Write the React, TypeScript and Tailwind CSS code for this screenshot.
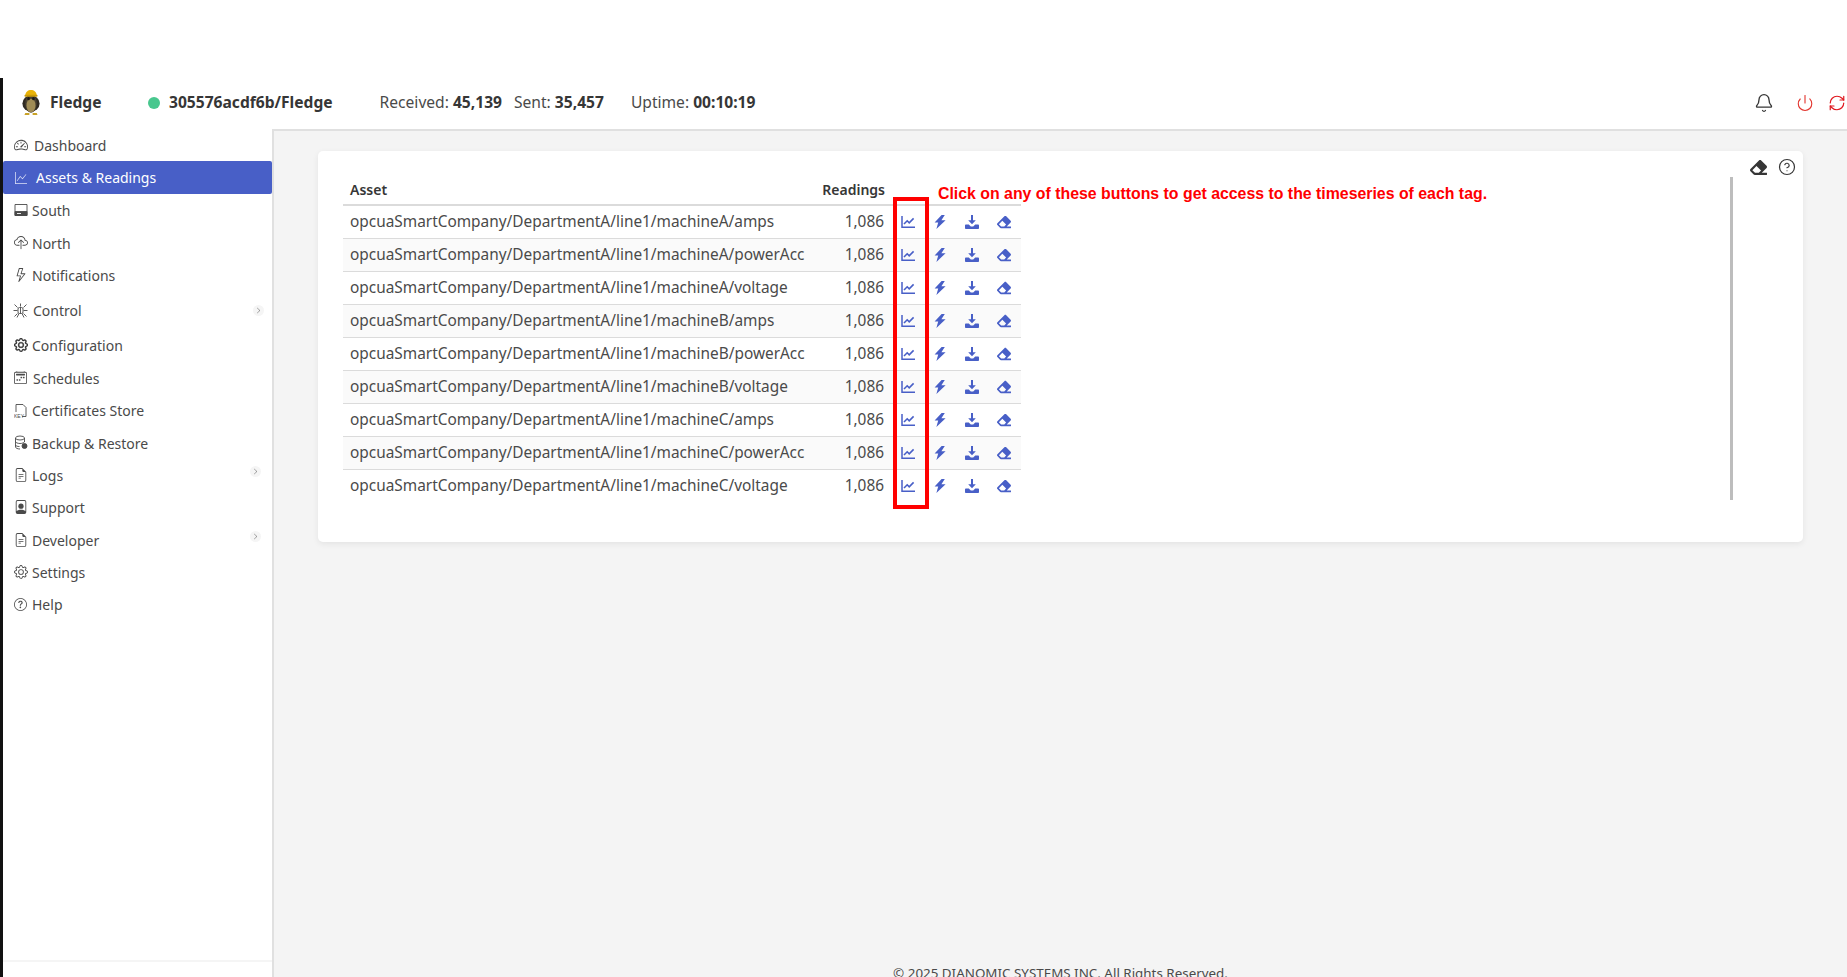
import React from "react";
import { FaEraser } from "react-icons/fa";
import {
  BsCalendar2Week,
  BsChevronRight,
  BsCloudUpload,
  BsFilePerson,
  BsFileEarmarkText,
  BsGear,
  BsGraphUp,
  BsLightning,
  BsQuestionCircle,
  BsSpeedometer2,
} from "react-icons/bs";
import { Bell, ChevronLeft, CircleHelp, Power, RefreshCw } from "lucide-react";

const OwlLogo = () => (
  <svg width="18" height="27" viewBox="0 0 22 28" preserveAspectRatio="none">
    <ellipse cx="11" cy="15" rx="10.5" ry="8.5" fill="#2f2a22" />
    <ellipse cx="11" cy="15" rx="7" ry="9.5" fill="#4a4130" />
    <ellipse cx="11" cy="17" rx="5.5" ry="7" fill="#a08c55" />
    <path d="M4 7 C4 -1 18 -1 18 7 Z" fill="#eab308" />
    <rect x="3" y="6" width="16" height="2" rx="1" fill="#ca9a06" />
    <circle cx="8" cy="10" r="1.6" fill="#1c1917" />
    <circle cx="14" cy="10" r="1.6" fill="#1c1917" />
    <path d="M4 25 h5 v2 h-6 Z M13 25 h5 l1 2 h-6 Z" fill="#c9a227" />
  </svg>
);

const ServerIcon = () => (
  <svg width="14" height="14" viewBox="0 0 14 14" fill="none" stroke="#4a4a4a" strokeWidth="0.9">
    <path d="M1 1.5h12v11H1z" />
    <path d="M1 8.5h12v4H1z" fill="#4a4a4a" />
    <path d="M3 10.5h4" stroke="#fff" />
  </svg>
);

const KeyFileIcon = () => (
  <svg width="14" height="15" viewBox="0 0 14 15" fill="none" stroke="#4a4a4a" strokeWidth="0.9">
    <path d="M2 9V1.5h7l3 3v9H8" />
    <text x="0" y="14.5" fontSize="5" fill="#4a4a4a" stroke="none" fontFamily="Liberation Sans, sans-serif">
      KEY
    </text>
  </svg>
);

const BackupIcon = () => (
  <svg width="14" height="15" viewBox="0 0 14 15" fill="none" stroke="#4a4a4a" strokeWidth="0.9">
    <ellipse cx="6" cy="3" rx="4.5" ry="2" />
    <path d="M1.5 3v9c0 1 2 2 4.5 2M10.5 3v4M1.5 6.5c0 1 2 2 4.5 2s4.5-1 4.5-2M1.5 10c0 1 2 1.5 4 1.5" />
    <circle cx="10.5" cy="11" r="2.5" fill="#4a4a4a" />
  </svg>
);

const ControlIcon = () => (
  <svg width="15" height="15" viewBox="0 0 15 15" fill="none" stroke="#4a4a4a" strokeWidth="0.9">
    <rect x="5" y="4.5" width="5" height="6" rx="1.5" />
    <path d="M7.5 4.5v6M7.5 0.5v3M1.5 1.5l3 3M13.5 1.5l-3 3M0.5 7.5h4M10.5 7.5h4M1.5 13.5l3-3M13.5 13.5l-3-3M4 14.5l2-4M11 14.5l-2-4" />
  </svg>
);

// table action icons, drawn to match the solid glyphs in the picture
const ChartIcon = () => (
  <svg width="14" height="14" viewBox="0 0 14 14" fill="none" stroke="currentColor">
    <path d="M1 1v11.2h13" strokeWidth="1.5" />
    <path d="M3 9l3.2-3.2 2 2L12.6 3.4" strokeWidth="1.6" />
  </svg>
);

const BoltIcon = () => (
  <svg width="12" height="14" viewBox="0 0 12 14" fill="currentColor">
    <path d="M7.6 0 0.6 7.6h3.6L2.4 14 11.6 5.2H7.4L10.8 0Z" />
  </svg>
);

const DownloadIcon = () => (
  <svg width="14" height="14" viewBox="0 0 14 14" fill="currentColor">
    <path d="M6 0h2v5.2h2.8L7 9.2 3.2 5.2H6z" />
    <path d="M0.8 9.6h3l2 1.8h2.4l2-1.8h3c.4 0 .8.4.8.8v2.8c0 .4-.4.8-.8.8H.8c-.4 0-.8-.4-.8-.8v-2.8c0-.4.4-.8.8-.8z" />
  </svg>
);

const icon = "text-[#4a4a4a]";

const menu = [
  { label: "Dashboard", h: "h-[32.4px]", gap: "gap-[6px]", el: <BsSpeedometer2 size={14} className={icon} /> },
  { label: "Assets & Readings", h: "h-[32.6px]", gap: "gap-[8px]", active: true, el: <BsGraphUp size={12} className="text-[#dfe3f7]" /> },
  { label: "South", h: "h-[32.4px]", gap: "gap-[4px]", el: <ServerIcon /> },
  { label: "North", h: "h-[32.4px]", gap: "gap-[4px]", el: <BsCloudUpload size={14} className={icon} /> },
  { label: "Notifications", h: "h-[32.4px]", gap: "gap-[4px]", el: <BsLightning size={14} className={icon} /> },
  { label: "Control", h: "h-[38px]", gap: "gap-[5px]", chevron: "mt-0", el: <ControlIcon /> },
  { label: "Configuration", h: "h-[32.4px]", gap: "gap-[4px]", el: <BsGear size={14} className="text-[#333] stroke-[0.6px]" /> },
  { label: "Schedules", h: "h-[32.4px]", gap: "gap-[5px]", el: <BsCalendar2Week size={13} className={icon} /> },
  { label: "Certificates Store", h: "h-[32.4px]", gap: "gap-[4px]", el: <KeyFileIcon /> },
  { label: "Backup & Restore", h: "h-[32.4px]", gap: "gap-[4px]", el: <BackupIcon /> },
  { label: "Logs", h: "h-[32.4px]", gap: "gap-[4px]", chevron: "-mt-[7px] mr-[3px]", el: <BsFileEarmarkText size={14} className={icon} /> },
  { label: "Support", h: "h-[32.4px]", gap: "gap-[4px]", el: <BsFilePerson size={14} className={icon} /> },
  { label: "Developer", h: "h-[32.4px]", gap: "gap-[4px]", chevron: "-mt-[7px] mr-[3px]", el: <BsFileEarmarkText size={14} className={icon} /> },
  { label: "Settings", h: "h-[32.4px]", gap: "gap-[4px]", el: <BsGear size={14} className={icon} /> },
  { label: "Help", h: "h-[32.4px]", gap: "gap-[4px]", el: <BsQuestionCircle size={13} className={icon} /> },
];

const assets = [
  "opcuaSmartCompany/DepartmentA/line1/machineA/amps",
  "opcuaSmartCompany/DepartmentA/line1/machineA/powerAcc",
  "opcuaSmartCompany/DepartmentA/line1/machineA/voltage",
  "opcuaSmartCompany/DepartmentA/line1/machineB/amps",
  "opcuaSmartCompany/DepartmentA/line1/machineB/powerAcc",
  "opcuaSmartCompany/DepartmentA/line1/machineB/voltage",
  "opcuaSmartCompany/DepartmentA/line1/machineC/amps",
  "opcuaSmartCompany/DepartmentA/line1/machineC/powerAcc",
  "opcuaSmartCompany/DepartmentA/line1/machineC/voltage",
];

const App = () => {
  return (
    <div className="h-[977px] overflow-hidden bg-white font-['Noto_Sans',sans-serif] text-[14px] text-[#4a4a4a]">
      <div className="h-[78px]" />
      <div className="flex h-[899px] flex-col border-l-[3px] border-[#111]">
        {/* top bar */}
        <header className="flex h-[51px] shrink-0 items-center pb-[2px] text-[15.6px]">
          <div className="ml-[19px] flex w-[113px] items-center gap-[10px]">
            <OwlLogo />
            <span className="font-bold text-[#363636]">Fledge</span>
          </div>
          <span className="ml-[13px] h-3 w-3 rounded-full bg-[#48c78e]" />
          <span className="ml-[9px] font-bold text-[#363636]">305576acdf6b/Fledge</span>
          <span className="ml-[47px]">
            Received: <b className="text-[#363636]">45,139</b>
          </span>
          <span className="ml-3">
            Sent: <b className="text-[#363636]">35,457</b>
          </span>
          <span className="ml-[27px]">
            Uptime: <b className="text-[#363636]">00:10:19</b>
          </span>
          <div className="ml-auto flex items-center pr-[1px]">
            <Bell size={20} strokeWidth={1.6} className="text-[#363636]" />
            <Power size={18} strokeWidth={1.5} className="ml-[22px] text-[#e2362f]" />
            <RefreshCw size={18} strokeWidth={1.6} className="ml-[14px] text-[#e0181f]" />
          </div>
        </header>

        <div className="flex min-h-0 flex-1">
          {/* sidebar */}
          <aside className="flex w-[269px] shrink-0 flex-col">
            {menu.map((m) => (
              <div
                key={m.label}
                className={`flex items-center pl-[10px] pr-[8px] ${m.h} ${m.gap} ${
                  m.active ? "rounded-[2px] bg-[#485fc7] text-white" : ""
                }`}
              >
                <span className="flex w-[15px] justify-center">{m.el}</span>
                <span className={m.active ? "" : "pt-[1px]"}>{m.label}</span>
                {m.chevron && (
                  <span
                    className={`ml-auto flex h-[11px] w-[11px] items-center justify-center rounded-full bg-[#f5f5f5] text-[#6a6a6a] ${m.chevron}`}
                  >
                    <BsChevronRight size={7} />
                  </span>
                )}
              </div>
            ))}
            <div className="mt-auto flex h-[17px] justify-center border-t-2 border-[#f5f5f5] pt-[12px]">
              <ChevronLeft size={14} className="text-[#bbb]" />
            </div>
          </aside>

          {/* main */}
          <main className="relative flex min-w-0 flex-1 flex-col border-t-2 border-l-2 border-[#e0e0e0] bg-[#f4f4f4] pl-[44px] pr-[44px] pt-[20px]">
            <section className="relative h-[391px] rounded-[5px] bg-white pl-[25px] pt-[24px] shadow-[0_2px_6px_rgba(10,10,10,0.07)]">
              <table className="w-[678px] table-fixed border-collapse text-[15.4px]">
                <thead>
                  <tr className="h-[30px] border-b-2 border-[#dbdbdb] text-[#363636]">
                    <th className="w-[473px] pl-[7px] pb-[1px] text-left text-[14px] font-semibold">Asset</th>
                    <th className="w-[69px] pb-[1px] text-right text-[14px] font-semibold">Readings</th>
                    <th />
                  </tr>
                </thead>
                <tbody>
                  {assets.map((a, i) => (
                    <tr key={a} className={`h-[33px] ${i < 8 ? "border-b border-[#dbdbdb]" : ""} ${i % 2 === 1 ? "bg-[#fafafa]" : ""}`}>
                      <td className="whitespace-nowrap pl-[7px]">
                        <div className="w-[458px] overflow-hidden">{a}</div>
                      </td>
                      <td className="pr-[1px] text-right">1,086</td>
                      <td>
                        <div className="flex items-center pl-[16px] text-[#485fc7]">
                          <span className="flex w-[32px] shrink-0"><ChartIcon /></span>
                          <span className="flex w-[32px] shrink-0 pl-[1px]"><BoltIcon /></span>
                          <span className="flex w-[32px] shrink-0"><DownloadIcon /></span>
                          <span className="flex w-[32px] shrink-0"><FaEraser size={14} /></span>
                        </div>
                      </td>
                    </tr>
                  ))}
                </tbody>
              </table>

              {/* annotation laid over the screenshot */}
              <div className="absolute left-[575px] top-[46px] h-[312px] w-[36px] border-4 border-[#ff0000]" />
              <div className="absolute left-[620px] top-[31px] font-['Liberation_Sans',sans-serif] text-[15.87px] font-bold text-[#ff0000]">
                Click on any of these buttons to get access to the timeseries of each tag.
              </div>

              <div className="absolute right-[7px] top-[7px] flex items-center gap-[11px] text-[#363636]">
                <FaEraser size={17} />
                <CircleHelp size={18} strokeWidth={1.6} />
              </div>
              <div className="absolute left-[1412px] top-[26px] h-[323px] w-[3px] bg-[#bdbdbd]" />
            </section>
            <footer className="-mb-[3px] mt-auto text-center text-[13.4px] leading-none">
              © 2025 DIANOMIC SYSTEMS INC. All Rights Reserved.
            </footer>
          </main>
        </div>
      </div>
    </div>
  );
};

export default App;
